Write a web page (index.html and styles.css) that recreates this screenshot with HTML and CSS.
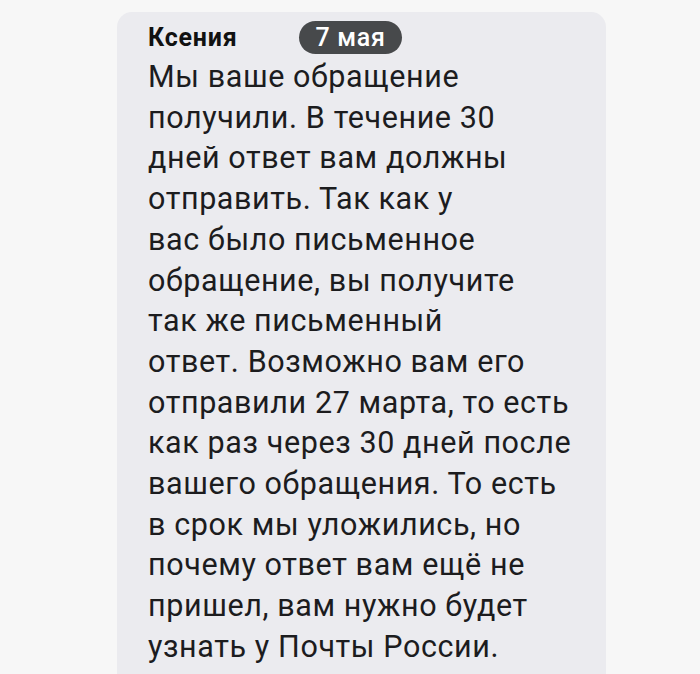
FILE: index.html
```html
<!DOCTYPE html>
<html lang="ru">
<head>
<meta charset="utf-8">
<link rel="stylesheet" href="styles.css">
</head>
<body>
<div class="bubble">
  <div class="header">
    <span class="name">Ксения</span>
    <span class="date">7 мая</span>
  </div>
  <div class="text">
    <div>Мы ваше обращение</div>
    <div>получили. В течение 30</div>
    <div>дней ответ вам должны</div>
    <div>отправить. Так как у</div>
    <div>вас было письменное</div>
    <div>обращение, вы получите</div>
    <div>так же письменный</div>
    <div>ответ. Возможно вам его</div>
    <div>отправили 27 марта, то есть</div>
    <div>как раз через 30 дней после</div>
    <div>вашего обращения. То есть</div>
    <div>в срок мы уложились, но</div>
    <div>почему ответ вам ещё не</div>
    <div>пришел, вам нужно будет</div>
    <div>узнать у Почты России.</div>
  </div>
</div>
</body>
</html>
```

FILE: styles.css
```css
html, body {
  margin: 0;
  padding: 0;
  background: #f7f7f7;
  height: 674px;
  overflow: hidden;
}
.bubble {
  margin: 12px 0 0 117px;
  width: 489px;
  height: 662px;
  box-sizing: border-box;
  background: #ebebef;
  border-radius: 15px 15px 0 0;
  padding: 9px 10px 0 31px;
  font-family: Roboto, "Noto Sans", sans-serif;
  color: #1c1c1e;
  overflow: hidden;
}
.header {
  display: flex;
  align-items: center;
  height: 33px;
  margin-bottom: 3px;
}
.name {
  font-size: 25px;
  font-weight: 700;
  letter-spacing: 0.8px;
  line-height: 33px;
  color: #111;
}
.date {
  margin-left: 62px;
  height: 33px;
  line-height: 33px;
  padding: 0 16px;
  border-radius: 17px;
  background: #47494b;
  color: #fff;
  font-size: 25px;
  font-weight: 500;
  letter-spacing: 0.7px;
}
.text {
  font-size: 30.5px;
  line-height: 40.7px;
  letter-spacing: 0.6px;
  white-space: nowrap;
}
```
